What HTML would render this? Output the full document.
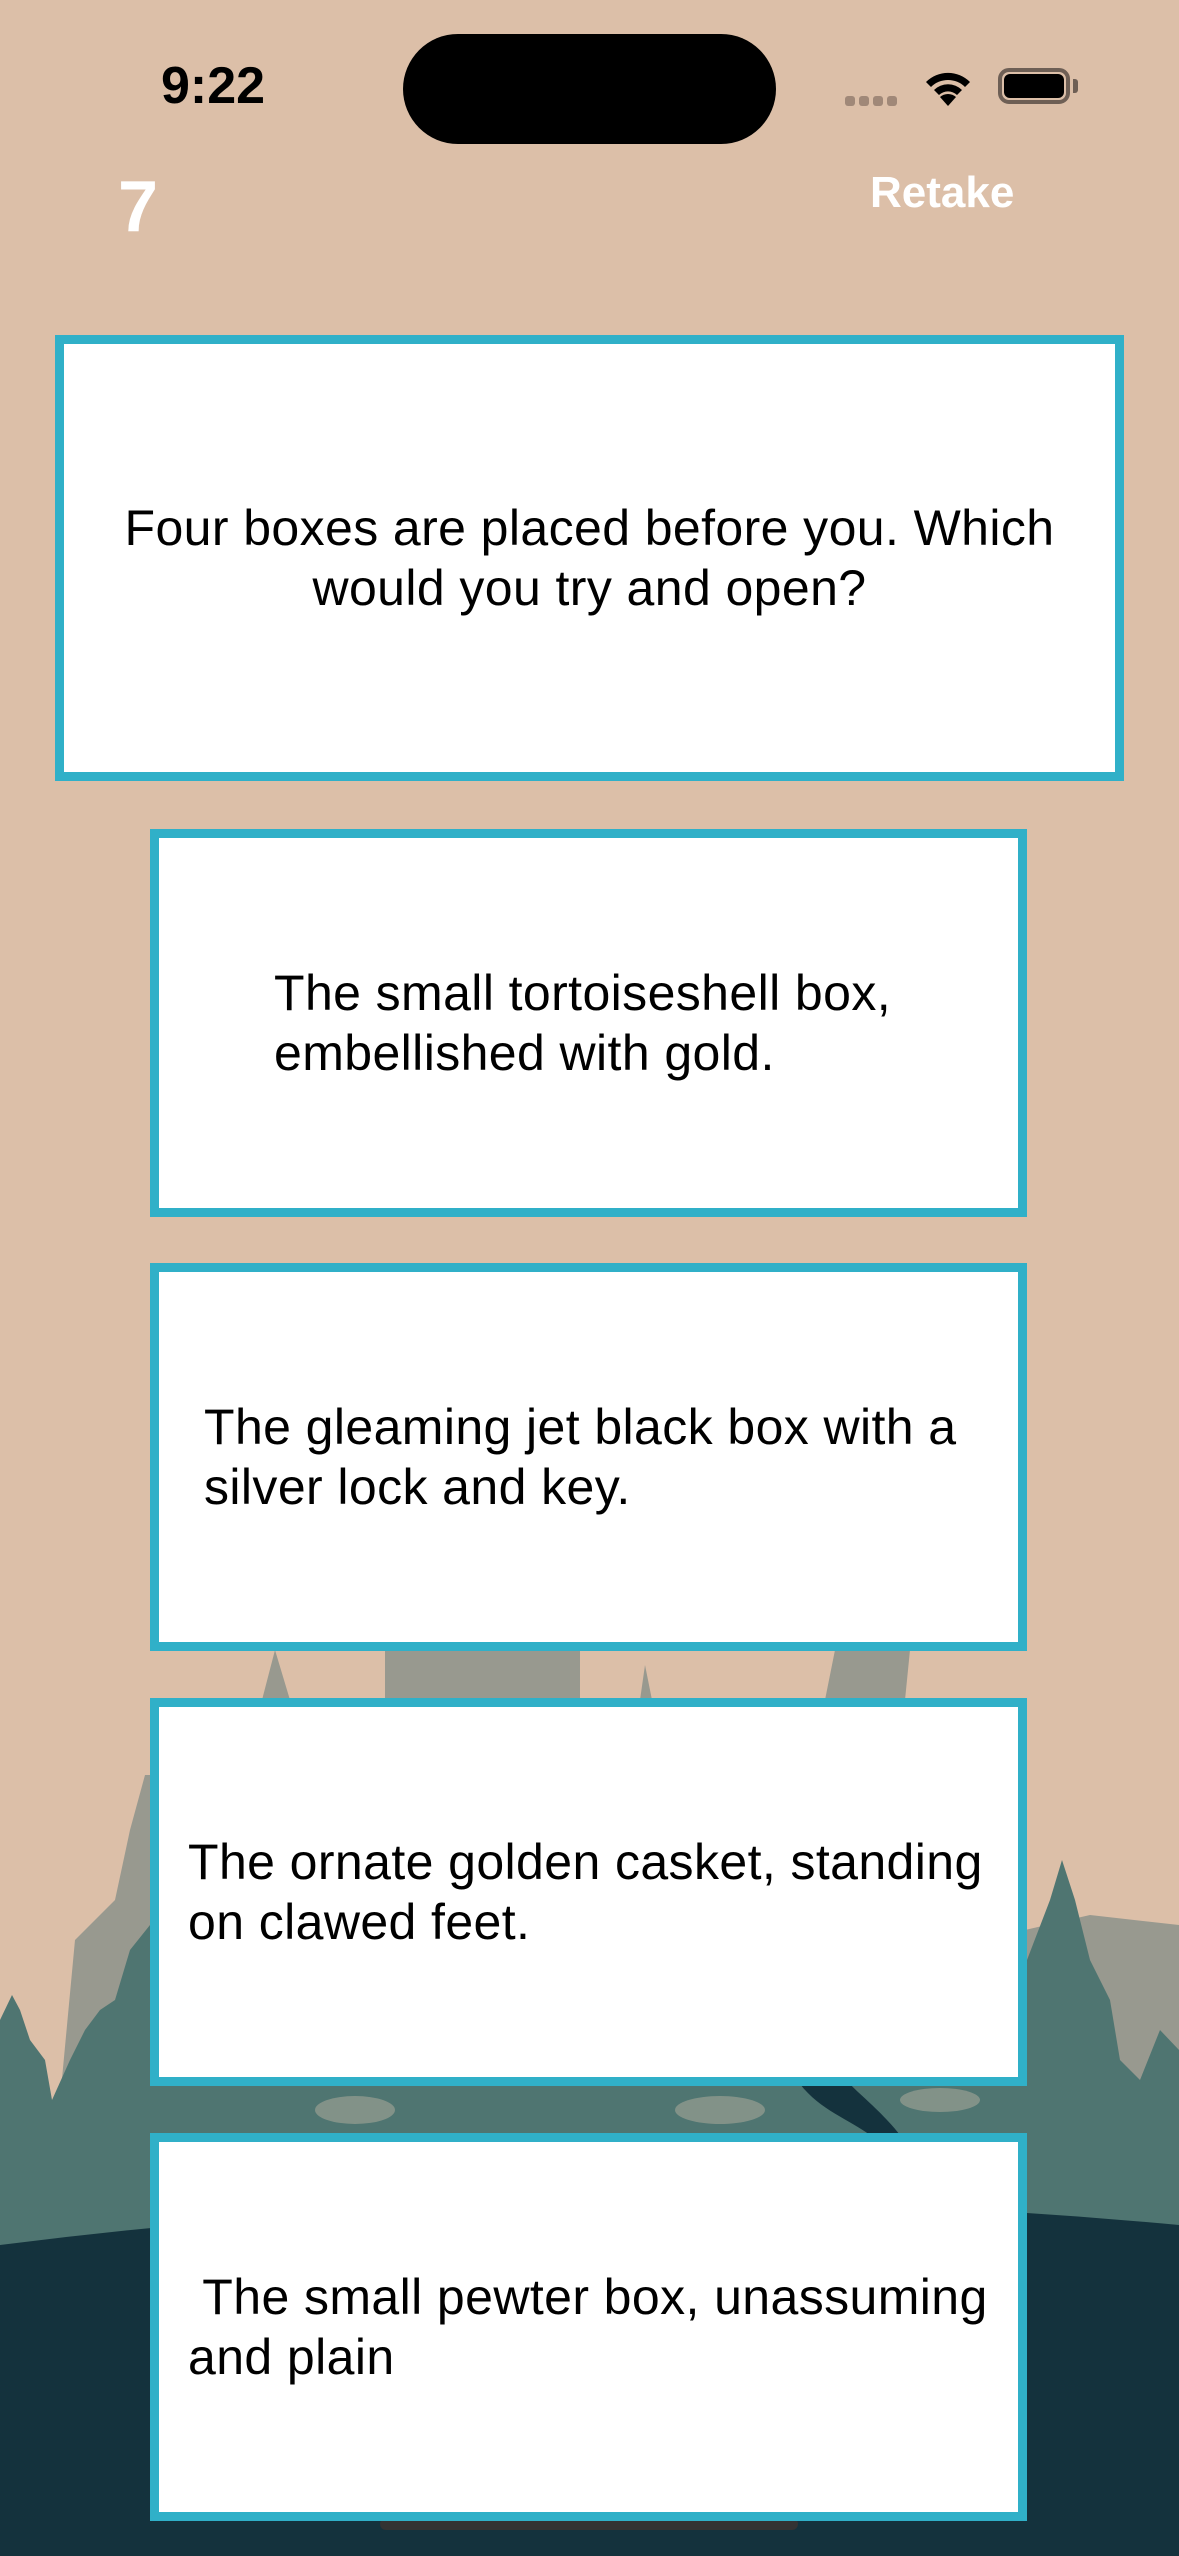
<!DOCTYPE html>
<html><head><meta charset="utf-8"><style>
html,body{margin:0;padding:0}
body{width:1179px;height:2556px;position:relative;overflow:hidden;background:#dcbfa8;font-family:"Liberation Sans",sans-serif}
.bg{position:absolute;left:0;top:0}
.box{position:absolute;background:#fff;border:9px solid #30b0c8;box-sizing:border-box;display:flex;align-items:center;color:#000;font-size:50px;letter-spacing:0.4px;line-height:60px;white-space:nowrap}
.q{left:55px;top:335px;width:1069px;height:446px;justify-content:center;text-align:center}
.o{left:150px;width:877px;height:388px}
</style></head><body>
<svg class="bg" width="1179" height="2556" viewBox="0 0 1179 2556">
<g fill="#98998f">
<path d="M262 1700 L275 1650 L290 1700 Z"/>
<path d="M385 1700 L420 1645 L425 1700 Z"/>
<path d="M385 1650 L580 1650 L580 1700 L385 1700 Z"/>
<path d="M640 1700 L645 1665 L652 1700 Z"/>
<path d="M825 1700 L835 1650 L910 1650 L905 1700 Z"/>
<path d="M115 1900 L130 1830 L145 1775 L150 1775 L150 2100 L60 2100 L75 1940 Z"/>
<path d="M1025 1930 L1090 1915 L1179 1925 L1179 2150 L1025 2150 Z"/>
<path d="M150 2084 L1027 2084 L1027 2140 L150 2140 Z"/>
</g>
<g fill="#4f7571">
<path d="M0 2020 L12 1995 L20 2010 L30 2040 L45 2060 L52 2100 L70 2060 L85 2030 L100 2010 L115 2000 L130 1950 L150 1925 L150 2260 L0 2260 Z"/>
<path d="M1027 1960 L1050 1900 L1062 1860 L1075 1900 L1090 1960 L1110 2000 L1120 2060 L1140 2080 L1160 2030 L1179 2050 L1179 2260 L1027 2260 Z"/>
<path d="M150 2084 L1027 2084 L1027 2260 L150 2260 Z"/>
</g>
<g fill="#8f9a8f" opacity="0.8">
<ellipse cx="355" cy="2110" rx="40" ry="14"/>
<ellipse cx="720" cy="2110" rx="45" ry="14"/>
<ellipse cx="940" cy="2100" rx="40" ry="12"/>
</g>
<path d="M800 2084 C820 2110 850 2120 870 2135 L900 2135 C880 2110 860 2095 850 2084 Z" fill="#14323d"/>
<path d="M0 2245 Q590 2170 1179 2225 L1179 2556 L0 2556 Z" fill="#14323d"/>
<rect x="380" y="2518" width="418" height="12" rx="6" fill="#333"/>
</svg>

<div style="position:absolute;left:403px;top:34px;width:373px;height:110px;border-radius:55px;background:#000"></div>
<div style="position:absolute;left:161px;top:56px;font-size:52px;font-weight:bold;color:#000">9:22</div>
<div style="position:absolute;left:845px;top:96px;width:58px;height:10px">
<span style="position:absolute;left:0;width:10px;height:10px;border-radius:3px;background:#a08878"></span>
<span style="position:absolute;left:14px;width:10px;height:10px;border-radius:3px;background:#a08878"></span>
<span style="position:absolute;left:28px;width:10px;height:10px;border-radius:3px;background:#a08878"></span>
<span style="position:absolute;left:42px;width:10px;height:10px;border-radius:3px;background:#a08878"></span>
</div>
<svg style="position:absolute;left:922px;top:66px" width="52" height="42" viewBox="0 0 52 42">
<path d="M26 40 L18 31 A12 12 0 0 1 34 31 Z" fill="#000"/>
<path d="M12 24 A20 20 0 0 1 40 24 L35 29 A13 13 0 0 0 17 29 Z" fill="#000"/>
<path d="M4 16 A31 31 0 0 1 48 16 L43 21 A24 24 0 0 0 9 21 Z" fill="#000"/>
</svg>
<div style="position:absolute;left:998px;top:68px;width:72px;height:36px;border:4px solid #6e5f55;border-radius:11px;box-sizing:border-box"></div>
<div style="position:absolute;left:1004px;top:74px;width:60px;height:24px;border-radius:6px;background:#000"></div>
<div style="position:absolute;left:1073px;top:79px;width:5px;height:14px;border-radius:0 3px 3px 0;background:#6e5f55"></div>

<div style="position:absolute;left:118px;top:166px;font-size:72px;font-weight:bold;color:#fff">7</div>
<div style="position:absolute;left:870px;top:168px;font-size:44px;font-weight:bold;color:#fff">Retake</div>

<div class="box q"><div>Four boxes are placed before you. Which<br>would you try and open?</div></div>
<div class="box o" style="top:829px"><div style="padding-left:115px">The small tortoiseshell box,<br>embellished with gold.</div></div>
<div class="box o" style="top:1263px"><div style="padding-left:45px">The gleaming jet black box with a<br>silver lock and key.</div></div>
<div class="box o" style="top:1698px"><div style="padding-left:29px">The ornate golden casket, standing<br>on clawed feet.</div></div>
<div class="box o" style="top:2133px"><div style="padding-left:29px">&nbsp;The small pewter box, unassuming<br>and plain</div></div>
</body></html>
